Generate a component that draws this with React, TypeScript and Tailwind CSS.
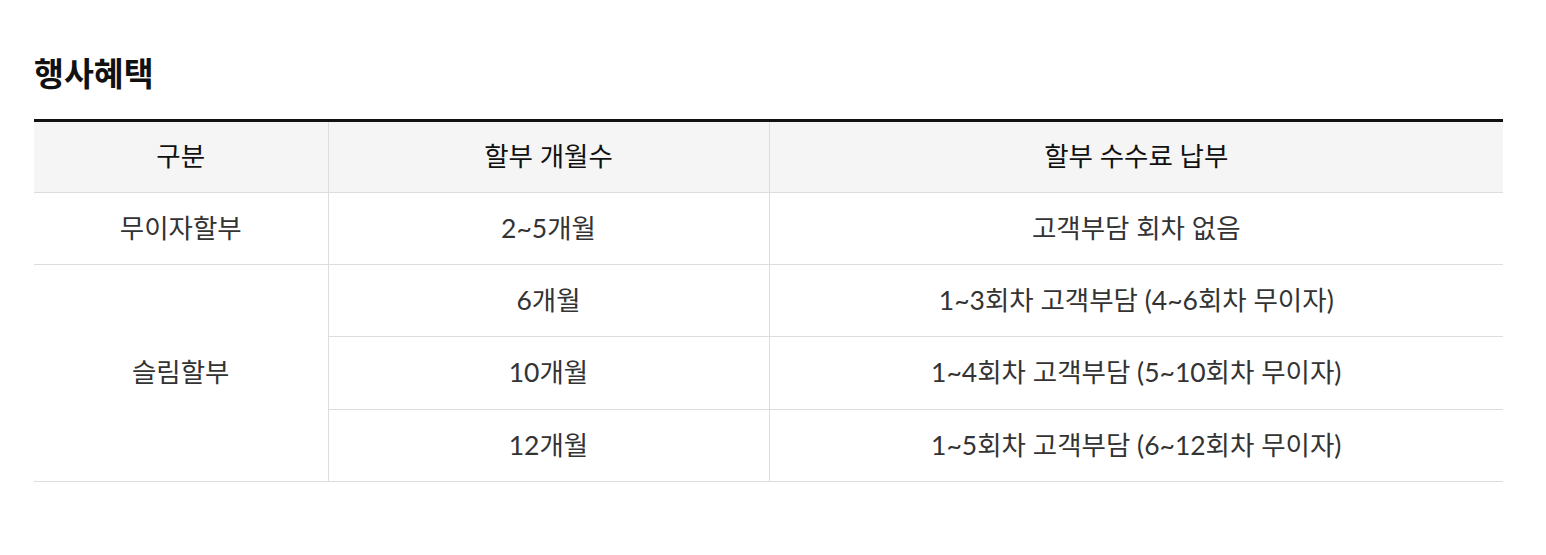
const rows = [
  { months: '6개월', fee: '1~3회차 고객부담 (4~6회차 무이자)', h: 'h-[72px]' },
  { months: '10개월', fee: '1~4회차 고객부담 (5~10회차 무이자)', h: 'h-[73px]' },
  { months: '12개월', fee: '1~5회차 고객부담 (6~12회차 무이자)', h: 'h-[72px]' },
];

export default function App() {
  return (
    <div
      className="min-h-screen bg-white px-[34px] pt-[52px] text-[#333]"
      style={{ fontFamily: 'Lato, "Noto Sans CJK KR", sans-serif' }}
    >
      <h2 className="text-[32.5px] font-bold leading-[44px] text-[#111]">행사혜택</h2>
      <table className="mt-[23px] w-[1469px] table-fixed border-collapse border-t-[3px] border-[#111] text-[26.5px]">
        <colgroup>
          <col className="w-[294px]" />
          <col className="w-[441px]" />
          <col />
        </colgroup>
        <thead>
          <tr className="h-[72px] bg-[#f5f5f5] text-[#111]">
            <th className="border-b border-[#ddd] font-normal">구분</th>
            <th className="border-b border-l border-[#ddd] font-normal">할부 개월수</th>
            <th className="border-b border-l border-[#ddd] font-normal">할부 수수료 납부</th>
          </tr>
        </thead>
        <tbody>
          <tr className="h-[72px]">
            <td className="border-b border-[#ddd] text-center">무이자할부</td>
            <td className="border-b border-l border-[#ddd] text-center">2~5개월</td>
            <td className="border-b border-l border-[#ddd] text-center">고객부담 회차 없음</td>
          </tr>
          {rows.map((r, i) => (
            <tr key={r.months} className={r.h}>
              {i === 0 && (
                <td rowSpan={3} className="border-b border-[#ddd] text-center">
                  슬림할부
                </td>
              )}
              <td className="border-b border-l border-[#ddd] text-center">{r.months}</td>
              <td className="border-b border-l border-[#ddd] text-center">{r.fee}</td>
            </tr>
          ))}
        </tbody>
      </table>
    </div>
  );
}
